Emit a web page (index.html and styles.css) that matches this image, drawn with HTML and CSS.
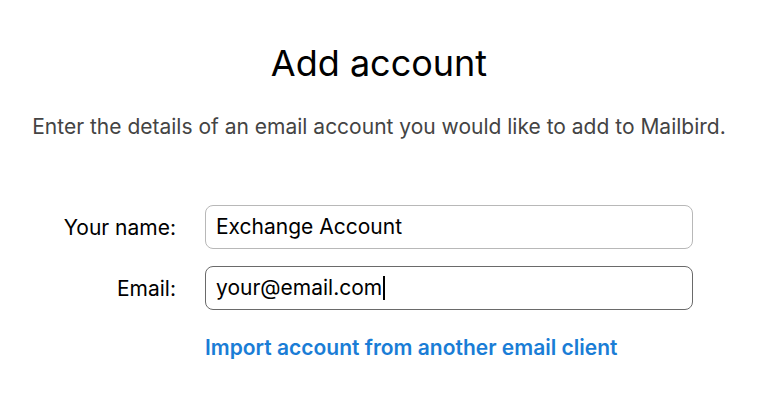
FILE: index.html
```html
<!DOCTYPE html>
<html lang="en">
<head>
    <meta charset="UTF-8">
    <title>Add account</title>
    <link rel="stylesheet" href="styles.css">
</head>
<body>
    <div class="container">
        <h1>Add account</h1>
        <p class="intro">Enter the details of an email account you would like to add to Mailbird.</p>
        <form class="account-form">
            <div class="form-row">
                <label for="name">Your name:</label>
                <div class="field">Exchange Account</div>
            </div>
            <div class="form-row">
                <label for="email">Email:</label>
                <div class="field focused">your@email.com<span class="caret"></span></div>
            </div>
            <div class="form-row">
                <span></span>
                <a href="#" class="import-link">Import account from another email client</a>
            </div>
        </form>
    </div>
</body>
</html>
```

FILE: styles.css
```css
body {
    font-family: Inter, "Noto Sans", sans-serif;
    background: #fff;
    color: #000;
    margin: 0;
}
.container {
    width: 758px;
    padding-top: 41px;
}
h1 {
    text-align: center;
    font-size: 36px;
    font-weight: 400;
    margin: 0;
    line-height: 44px;
}
.intro {
    text-align: center;
    font-size: 21px;
    color: #444;
    margin: 29px 0 0;
    line-height: 26px;
}
.account-form {
    margin-top: 65px;
    display: flex;
    flex-direction: column;
    gap: 17px;
}
.form-row {
    display: grid;
    grid-template-columns: 176px 488px;
    column-gap: 29px;
    align-items: center;
}
label {
    text-align: right;
    font-size: 21px;
}
.field {
    height: 42px;
    border: 1px solid #b8b8b8;
    border-radius: 8px;
    padding: 0 10px;
    font-size: 21px;
    line-height: 42px;
    display: flex;
    align-items: center;
}
.field.focused {
    border-color: #6a6a6a;
}
.caret {
    display: inline-block;
    width: 2px;
    height: 24px;
    background: #000;
    margin-left: 1px;
}
.import-link {
    color: #1a7dd6;
    font-size: 21px;
    font-weight: 600;
    text-decoration: none;
    margin-top: 8px;
}
```
